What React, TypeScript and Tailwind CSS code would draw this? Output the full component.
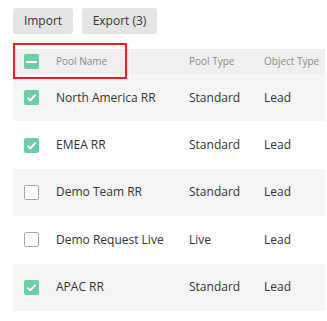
const rows = [
  { name: "North America RR", type: "Standard", object: "Lead", checked: true },
  { name: "EMEA RR", type: "Standard", object: "Lead", checked: true },
  { name: "Demo Team RR", type: "Standard", object: "Lead", checked: false },
  { name: "Demo Request Live", type: "Live", object: "Lead", checked: false },
  { name: "APAC RR", type: "Standard", object: "Lead", checked: true },
];

function Check({ checked }: { checked: boolean }) {
  if (!checked) {
    return <span className="block w-[15px] h-[15px] rounded-[2px] border border-[#a9a9a9] bg-white" />;
  }
  return (
    <span className="flex w-[15px] h-[15px] rounded-[2px] bg-[#6bcfa3] items-center justify-center">
      <svg width="11" height="11" viewBox="0 0 11 11">
        <path d="M1.5 5.8 L4.3 8.5 L9.6 2.6" fill="none" stroke="white" strokeWidth="1.9" />
      </svg>
    </span>
  );
}

export default function App() {
  return (
    <div className="w-[327px] h-[321px] bg-white overflow-hidden font-['Open_Sans',sans-serif]">
      <div className="flex gap-[9px] pl-[13px] pt-[8px]">
        <button className="h-[26px] w-[60px] rounded-[3px] bg-[#e5e5e5] text-[12px] text-[#333]">Import</button>
        <button className="h-[26px] w-[75px] rounded-[3px] bg-[#e5e5e5] text-[12px] text-[#333]">Export (3)</button>
      </div>
      <div className="ml-[13px] mt-[15px] w-[312px]">
        <div className="relative flex items-center h-[25px] bg-[#efefef] text-[10px] text-[#8a8a8a]">
          <div className="w-[43px] pl-[11px]">
            <span className="flex w-[15px] h-[15px] rounded-[2px] bg-[#6bcfa3] items-center justify-center">
              <span className="block w-[11px] h-[2px] bg-white" />
            </span>
          </div>
          <div className="w-[133px]">Pool Name</div>
          <div className="w-[75px]">Pool Type</div>
          <div>Object Type</div>
          <div className="absolute left-0 top-[-6px] w-[114px] h-[36px] border-2 border-[#ee1c25]" />
        </div>
        {rows.map((r, i) => (
          <div
            key={r.name}
            className={`flex items-center h-[47.4px] text-[12px] text-[#333] ${i % 2 === 0 ? "bg-[#f5f5f5]" : "bg-white"}`}
          >
            <div className="w-[43px] pl-[11px]">
              <Check checked={r.checked} />
            </div>
            <div className="w-[133px]">{r.name}</div>
            <div className="w-[75px]">{r.type}</div>
            <div>{r.object}</div>
          </div>
        ))}
      </div>
    </div>
  );
}
